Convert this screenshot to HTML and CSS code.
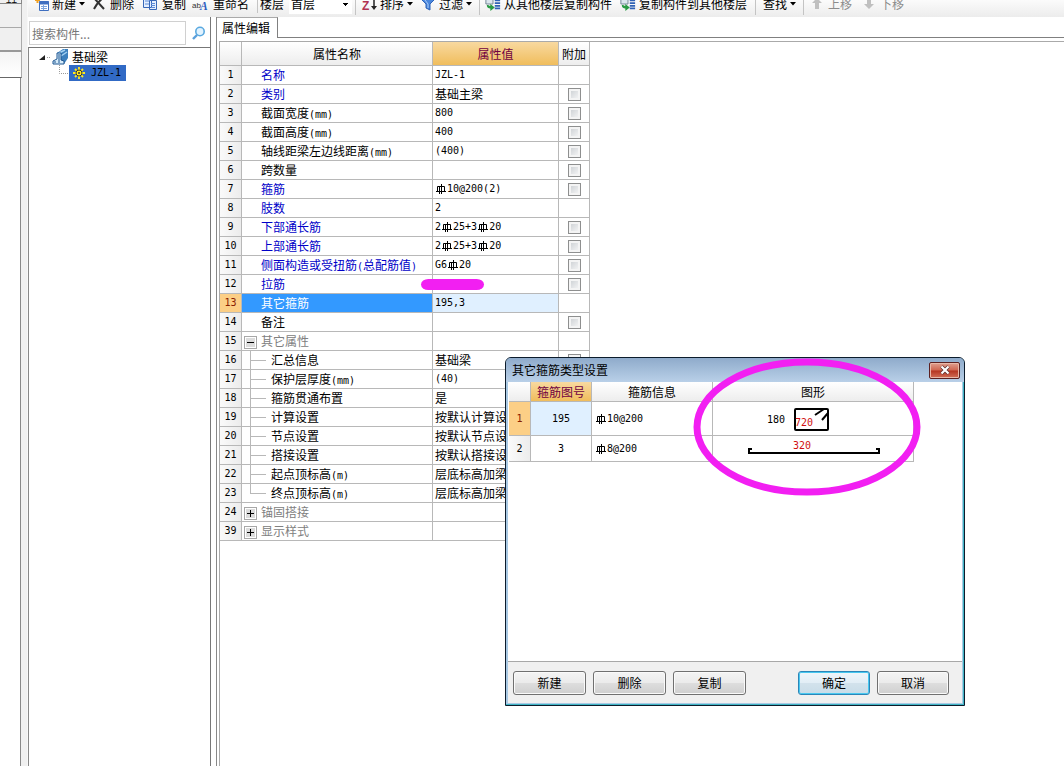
FILE: index.html
```
<!DOCTYPE html>
<html lang="zh-CN">
<head>
<meta charset="utf-8">
<title>属性编辑</title>
<link rel="stylesheet" href="styles.css">
</head>
<body>
<svg class="defs" aria-hidden="true">
  <symbol id="rebar" viewBox="0 0 12 12">
    <path d="M2.500 9v-5.500h7V9M1 8.500h10M4.500 3.500V11M6.500 1v10" fill="none" stroke="currentColor"/>
  </symbol>
  <symbol id="floors" viewBox="0 0 18 18">
    <path d="M1 3h8v6H1z" fill="#dce6ee" stroke="#6b7f90"/>
    <path d="M11 2h6M11 5h6M11 8h6M11 11h6M11 14h6" stroke="#2f62b5" stroke-width="2"/>
    <path d="M2 10c0 3 2 4 4 4v3l5-4-5-4v2c-1 0-2 0-2-1z" fill="#2a9a45"/>
  </symbol>
  <symbol id="caret" viewBox="0 0 6 4"><path d="M0 0h6L3 3.500z" fill="currentColor"/></symbol>
</svg>

<div class="app">
  <aside class="strip">
    <div class="strip-top"><span>++</span></div>
    <div class="strip-cell"></div>
    <div class="strip-cell strip-dark"></div>
    <div class="strip-cell strip-light"></div>
    <div class="strip-rest"></div>
  </aside>

  <div class="work">
    <div class="toolbar" role="toolbar">
      <button class="tool w-new"><svg class="i16" viewBox="0 0 16 16"><path d="M5.500 5.500h9v9h-9z" fill="#fff" stroke="#3f6fc0"/><path d="M5 7h10" stroke="#3f6fc0" stroke-width="3"/><path d="M7 10.500h6M7 12.500h6M9.500 9v5" stroke="#7da4dd"/><path d="M1 4h5M3.500 1v6" stroke="#f0a020" stroke-width="2"/></svg>新建<svg class="caret"><use href="#caret"/></svg></button>
      <button class="tool w-del"><svg class="i16" viewBox="0 0 16 16"><path d="M3 2l10 11M12 2C8 5 5 9 3 13" fill="none" stroke="#333" stroke-width="2"/></svg>删除</button>
      <button class="tool w-copy"><svg class="i16" viewBox="0 0 16 16"><path d="M1.500 1.500h8v10h-8zM7.500 4.500h7v9h-7z" fill="#e4efff" stroke="#3968b8"/><path d="M3 5h4M3 8h4M9 7.500h4M9 9.500h4M9 11.500h4" stroke="#5c8bd8"/></svg>复制</button>
      <button class="tool w-ren"><svg class="i16" viewBox="0 0 18 16"><text x="0" y="13" class="ab">ab</text><text x="9" y="15" class="big-a">A</text></svg>重命名</button>
      <label class="floor" for="floor">楼层</label>
      <select id="floor"><option>首层</option></select>
      <button class="tool sep w-sort"><svg class="i16" viewBox="0 0 16 16"><text x="1" y="14" class="zz">Z</text><path d="M13 3v9" stroke="#222" stroke-width="1.500"/><path d="M10 10h6l-3 4z" fill="#222"/></svg>排序<svg class="caret"><use href="#caret"/></svg></button>
      <button class="tool w-filter"><svg class="i16" viewBox="0 0 16 16"><path d="M2 2h12v2l-4 4v6l-4-2V8L2 4z" fill="#4a86dc" stroke="#2c62b8"/><path d="M5 4l3 4v4" fill="none" stroke="#a8cdf8"/></svg>过滤<svg class="caret"><use href="#caret"/></svg></button>
      <button class="tool sep w-from"><svg class="i16"><use href="#floors"/></svg>从其他楼层复制构件</button>
      <button class="tool w-to"><svg class="i16"><use href="#floors"/></svg>复制构件到其他楼层</button>
      <button class="tool sep w-find">查找<svg class="caret"><use href="#caret"/></svg></button>
      <button class="tool sep off w-up" disabled><svg class="i16" viewBox="0 0 16 16"><path d="M8 2l5 5h-3v6H6V7H3z" fill="#c0c0c0"/></svg>上移</button>
      <button class="tool off" disabled><svg class="i16" viewBox="0 0 16 16"><path d="M8 13l5-5h-3V3H6v5H3z" fill="#c0c0c0"/></svg>下移</button>
    </div>

    <div class="panes">
      <section class="side">
        <div class="search">
          <input type="text" aria-label="搜索构件" placeholder="搜索构件...">
          <button class="find" aria-label="搜索"><svg viewBox="0 0 14 14"><circle cx="8" cy="5.500" r="4.200" fill="#e2f3ff" stroke="#5aa9e0" stroke-width="1.600"/><path d="M5 9l-4 4" stroke="#5aa0dc" stroke-width="2.400"/></svg></button>
        </div>
        <ul class="tree">
          <li class="node">
            <svg class="twist" viewBox="0 0 14 16"><path d="M8 6v5H2z" fill="#222"/><path d="M10 8.500h4" stroke="#999" stroke-dasharray="1 1"/></svg>
            <svg class="beam" viewBox="0 0 16 16"><path d="M5 4l6-4h5v9l-4 6H9z" fill="#3d80bd"/><path d="M7 4l6-3M9 7l6-4" stroke="#a5d1f2" stroke-width="1.500"/><path d="M5 4h4v7l3 1v3H1v-3l4-2z" fill="#d5ebfa" stroke="#1d5590"/><path d="M7 5v9M3 12v2" stroke="#1d5590"/></svg>
            <span>基础梁</span>
          </li>
          <li class="node leaf">
            <svg class="elbow" viewBox="0 0 10 16"><path d="M.5 0v8.500H10" fill="none" stroke="#999" stroke-dasharray="1 1"/></svg>
            <span class="picked"><svg class="sun" viewBox="0 0 12 12"><path d="M6 0v12M0 6h12M2 2l8 8M10 2l-8 8" stroke="#ffea20" stroke-width="1.800"/><circle cx="6" cy="6" r="3" fill="#ffea20" stroke="#333"/><circle cx="6" cy="6" r="1" fill="#333"/></svg><span class="m">JZL-1</span></span>
          </li>
        </ul>
      </section>

      <main class="editor">
        <div class="tabs" role="tablist"><button class="tab" role="tab" aria-selected="true">属性编辑</button></div>
        <div class="sheet">
          <table class="grid props">
            <colgroup><col class="c-num"><col class="c-name"><col class="c-val"><col class="c-add"></colgroup>
            <thead><tr><th></th><th>属性名称</th><th class="hot">属性值</th><th>附加</th></tr></thead>
            <tbody>
              <tr><th>1</th><td class="key">名称</td><td class="m">JZL-1</td><td></td></tr>
              <tr><th>2</th><td class="key">类别</td><td>基础主梁</td><td><input type="checkbox" aria-label="附加 类别"></td></tr>
              <tr><th>3</th><td>截面宽度<span class="m">(mm)</span></td><td class="m">800</td><td><input type="checkbox" aria-label="附加 截面宽度"></td></tr>
              <tr><th>4</th><td>截面高度<span class="m">(mm)</span></td><td class="m">400</td><td><input type="checkbox" aria-label="附加 截面高度"></td></tr>
              <tr><th>5</th><td>轴线距梁左边线距离<span class="m">(mm)</span></td><td class="m">(400)</td><td><input type="checkbox" aria-label="附加 轴线距梁左边线距离"></td></tr>
              <tr><th>6</th><td>跨数量</td><td></td><td><input type="checkbox" aria-label="附加 跨数量"></td></tr>
              <tr><th>7</th><td class="key">箍筋</td><td class="m"><svg class="rb"><use href="#rebar"/></svg>10@200(2)</td><td><input type="checkbox" aria-label="附加 箍筋"></td></tr>
              <tr><th>8</th><td class="key">肢数</td><td class="m">2</td><td></td></tr>
              <tr><th>9</th><td class="key">下部通长筋</td><td class="m">2<svg class="rb"><use href="#rebar"/></svg>25+3<svg class="rb"><use href="#rebar"/></svg>20</td><td><input type="checkbox" aria-label="附加 下部通长筋"></td></tr>
              <tr><th>10</th><td class="key">上部通长筋</td><td class="m">2<svg class="rb"><use href="#rebar"/></svg>25+3<svg class="rb"><use href="#rebar"/></svg>20</td><td><input type="checkbox" aria-label="附加 上部通长筋"></td></tr>
              <tr><th>11</th><td class="key">侧面构造或受扭筋<span class="m">(</span>总配筋值<span class="m">)</span></td><td class="m">G6<svg class="rb"><use href="#rebar"/></svg>20</td><td><input type="checkbox" aria-label="附加 侧面构造或受扭筋"></td></tr>
              <tr><th>12</th><td class="key">拉筋</td><td class="marked"><span class="marker"></span></td><td><input type="checkbox" aria-label="附加 拉筋"></td></tr>
              <tr class="current"><th>13</th><td>其它箍筋</td><td class="m">195,3</td><td></td></tr>
              <tr><th>14</th><td>备注</td><td></td><td><input type="checkbox" aria-label="附加 备注"></td></tr>
              <tr><th>15</th><td class="group"><button class="fold minus" aria-label="收起"></button>其它属性</td><td></td><td></td></tr>
              <tr><th>16</th><td class="child">汇总信息</td><td>基础梁</td><td><input type="checkbox" aria-label="附加 汇总信息"></td></tr>
              <tr><th>17</th><td class="child">保护层厚度<span class="m">(mm)</span></td><td class="m">(40)</td><td></td></tr>
              <tr><th>18</th><td class="child">箍筋贯通布置</td><td>是</td><td></td></tr>
              <tr><th>19</th><td class="child">计算设置</td><td>按默认计算设</td><td></td></tr>
              <tr><th>20</th><td class="child">节点设置</td><td>按默认节点设</td><td></td></tr>
              <tr><th>21</th><td class="child">搭接设置</td><td>按默认搭接设</td><td></td></tr>
              <tr><th>22</th><td class="child">起点顶标高<span class="m">(m)</span></td><td>层底标高加梁</td><td></td></tr>
              <tr><th>23</th><td class="child last">终点顶标高<span class="m">(m)</span></td><td>层底标高加梁</td><td></td></tr>
              <tr><th>24</th><td class="group"><button class="fold plus" aria-label="展开"></button>锚固搭接</td><td></td><td></td></tr>
              <tr><th>39</th><td class="group"><button class="fold plus" aria-label="展开"></button>显示样式</td><td></td><td></td></tr>
            </tbody>
          </table>
        </div>
      </main>
    </div>
  </div>
</div>

<div class="dialog" role="dialog" aria-labelledby="dlg-title">
  <header class="title">
    <span id="dlg-title">其它箍筋类型设置</span>
    <button class="close" aria-label="关闭"><svg viewBox="0 0 12 10"><path d="M2.500 1.500l7 7M9.500 1.500l-7 7" stroke="#5a3030" stroke-width="3.600"/><path d="M2.500 1.500l7 7M9.500 1.500l-7 7" stroke="#fff" stroke-width="2.200"/></svg></button>
  </header>
  <div class="content">
    <table class="grid types">
      <colgroup><col class="t-num"><col class="t-id"><col class="t-info"><col class="t-shape"></colgroup>
      <thead><tr><th></th><th class="hot">箍筋图号</th><th>箍筋信息</th><th>图形</th></tr></thead>
      <tbody>
        <tr class="tall picked-row"><th>1</th><td class="m id">195</td><td class="m"><svg class="rb"><use href="#rebar"/></svg>10@200</td>
          <td class="shape"><svg class="fig1" viewBox="0 0 200 33"><text x="54" y="21" class="dim">180</text><rect x="82" y="7" width="33" height="21" rx="1" fill="none" stroke="#000" stroke-width="2"/><path d="M102 13l9-6M109 18l6-7" stroke="#000" stroke-width="2"/><text x="82" y="24" class="dim red">720</text></svg></td></tr>
        <tr class="low"><th>2</th><td class="m id">3</td><td class="m"><svg class="rb"><use href="#rebar"/></svg>8@200</td>
          <td class="shape"><svg class="fig2" viewBox="0 0 200 25"><text x="80" y="13" class="dim red">320</text><path d="M39 13h-3v4h130v-4h-3" fill="none" stroke="#000" stroke-width="2"/></svg></td></tr>
      </tbody>
    </table>
  </div>
  <footer class="actions">
    <button class="btn">新建</button>
    <button class="btn">删除</button>
    <button class="btn">复制</button>
    <span class="gap"></span>
    <button class="btn narrow primary">确定</button>
    <button class="btn narrow">取消</button>
  </footer>
  <svg class="ring" viewBox="0 0 228 138"><ellipse cx="114" cy="69" rx="110" ry="65" fill="none" stroke="#f21ff2" stroke-width="7"/></svg>
</div>
</body>
</html>
```
FILE: styles.css
```
* { box-sizing: border-box; }

html, body { height: 100%; }

body {
  margin: 0;
  overflow: hidden;
  position: relative;
  background: #fff;
  color: #000;
  font: 12px/18px "Noto Sans CJK SC", sans-serif;
}

button, input, select { font: inherit; color: inherit; }
button { padding: 0; border: 0; background: none; }

.defs { position: absolute; width: 0; height: 0; }
.m, .grid tbody th { font-family: "DejaVu Sans Mono", monospace; font-size: 10px; font-weight: normal; }
span.m { line-height: 10px; }

.app { display: flex; height: 100%; }

/* Left edge strip */
.strip { display: flex; flex-direction: column; flex: 0 0 22px; background: #f0f0f0; }
.strip-top {
  height: 4px;
  overflow: hidden;
  display: flex;
  align-items: center;
  justify-content: flex-end;
  padding-right: 4px;
  border-right: 1px solid #888;
  border-bottom: 1px solid #888;
  font-size: 10px;
}
.strip-cell { height: 24px; border-right: 1px solid #aaa; border-bottom: 1px solid #aaa; }
.strip-dark { border-bottom: 2px solid #999; }
.strip-light { height: 26px; background: linear-gradient(#f4f4f4, #fff); border-bottom-color: #666; }
.strip-rest { flex: 1; margin-right: 1px; background: #fff; border-right: 1px solid #888; }

.work {
  display: flex;
  flex-direction: column;
  flex: 1;
  min-width: 0;
  padding-left: 6px;
  background: linear-gradient(90deg, #f0f0f0 5px, #fff 6px);
}

/* Toolbar */
.toolbar {
  display: flex;
  align-items: center;
  flex: 0 0 27px;
  margin-top: -10px;
  padding-left: 6px;
  background: linear-gradient(#fdfdfd 30%, #ececec);
  white-space: nowrap;
}
.tool { display: flex; align-items: center; height: 22px; }
.sep { border-left: 1px solid #c4c4c4; padding-left: 5px; }
.off { color: #8c8c8c; }
.i16 { width: 16px; height: 16px; margin-right: 3px; }
.caret { width: 6px; height: 4px; margin-left: 3px; }
.w-new { width: 57px; }
.w-new .i16 { margin-right: 2px; }
.w-del { width: 51px; }
.w-copy { width: 50px; }
.w-copy .i16 { margin-right: 4px; }
.w-ren { width: 65px; }
.w-ren .i16 { margin-right: 5px; }
.w-sort { width: 65px; }
.w-filter { width: 59px; }
.w-from { width: 141px; }
.w-to { width: 135px; }
.w-find { width: 48px; padding-left: 7px; }
.w-up { width: 58px; }
.ab { font: 9px "Liberation Sans", sans-serif; fill: #333; }
.big-a { font: italic bold 13px "Liberation Serif", serif; fill: #2a5cc0; }
.zz { font: bold 12px "Liberation Sans", sans-serif; fill: #b03050; }
.floor { border-left: 1px solid #c4c4c4; padding-left: 2px; }
#floor {
  appearance: none;
  width: 63px;
  height: 20px;
  margin: 0 3px 0 5px;
  padding: 0 2px;
  border: 0;
  border-radius: 0;
  background: linear-gradient(#000, #000) 54px 9px / 5px 1px no-repeat,
    linear-gradient(#000, #000) 55px 10px / 3px 1px no-repeat,
    linear-gradient(#000, #000) 56px 11px / 1px 1px no-repeat, #fff;
}

.panes { display: flex; flex: 1; min-height: 0; }

/* Component tree */
.side { display: flex; flex-direction: column; flex: 0 0 183px; border-right: 1px solid #777; }
.search { display: flex; align-items: center; height: 30px; padding: 2px 2px 0 1px; gap: 6px; }
.search input {
  flex: 1;
  min-width: 0;
  height: 24px;
  padding: 0 2px;
  border: 1px solid #d0d0d0;
  background: #fff;
  color: #777;
}
.search input::placeholder { color: #777; opacity: 1; }
.find { width: 16px; height: 16px; }
.find svg { display: block; width: 14px; height: 14px; }
.tree {
  flex: 1;
  margin: 0;
  padding: 1px 0 0 8px;
  list-style: none;
  border-top: 1px solid #777;
  border-left: 1px solid #888;
}
.node { display: flex; align-items: center; height: 16px; }
.twist { width: 14px; height: 16px; margin-right: 1px; }
.beam { width: 16px; height: 16px; margin-right: 4px; }
.leaf { padding-left: 22px; }
.elbow { width: 10px; height: 16px; }
.picked { display: flex; align-items: center; height: 16px; padding: 0 5px 0 4px; background: #316ac5; }
.sun { width: 12px; height: 12px; margin-right: 6px; }

/* Property sheet */
.editor { display: flex; flex-direction: column; flex: 1; min-width: 0; margin-left: 5px; border-left: 1px solid #888; }
.tabs { display: flex; height: 21px; border-bottom: 1px solid #808080; }
.tab { height: 21px; padding: 0 7px 0 5px; background: #fff; border-top: 1px solid #aaa; border-right: 1px solid #808080; }
.sheet { flex: 1; margin: 3px 0 0 2px; border-top: 1px solid #aaa; border-left: 1px solid #aaa; }

.grid { border-collapse: separate; border-spacing: 0; table-layout: fixed; }
.grid th, .grid td {
  height: 19px;
  padding: 0;
  border-right: 1px solid #b8b8b8;
  border-bottom: 1px solid #b8b8b8;
  font-weight: normal;
  white-space: nowrap;
  overflow: hidden;
}
.grid thead th { background: linear-gradient(#fff, #ededed); }
.grid tbody th { background: linear-gradient(90deg, #fafafa, #ececec); text-align: center; }
.grid thead .hot { background: linear-gradient(#f8d9a0, #f0bd5c); color: #700040; }
.rb { width: 12px; height: 12px; vertical-align: -3px; }

.props { width: 370px; }
.c-num { width: 22px; }
.c-name { width: 191px; }
.c-val { width: 126px; }
.c-add { width: 31px; }
.props thead th { height: 24px; }
.props td { line-height: 18px; }
.props td:nth-child(2) { padding-left: 19px; }
.props td:nth-child(3) { padding-left: 2px; }
.props td:nth-child(4) { text-align: center; }
.props .key { color: #0000c8; }
.props .group { color: #808080; }
.props td.group { padding-left: 2px; }
.props td.child {
  padding-left: 29px;
  background: linear-gradient(#b8b8b8, #b8b8b8) 8px 0 / 1px 100% no-repeat,
    linear-gradient(#b8b8b8, #b8b8b8) 8px 9px / 16px 1px no-repeat;
}
.props td.last { background-size: 1px 9px, 16px 1px; }
.props .current th { background: #fccf86; color: #8a2000; }
.props .current td:nth-child(2) { background: #3399ff; color: #fff; }
.props .current td:nth-child(3) { background: #e0f0ff; }

.grid input {
  appearance: none;
  display: block;
  width: 13px;
  height: 13px;
  margin: 0 auto;
  border: 1px solid #8e8f8f;
  background: linear-gradient(135deg, #c8ccd0, #fafafa);
  box-shadow: inset 0 0 0 2px #f4f4f4;
}
.fold {
  width: 13px;
  height: 13px;
  margin-right: 4px;
  vertical-align: -2px;
  border: 1px solid #a8a8a8;
  box-shadow: inset 0 0 0 1px #fff;
}
.minus { background: linear-gradient(#000, #000) center / 7px 1px no-repeat, #dcdcdc; }
.plus { background: linear-gradient(#000, #000) center / 7px 1px no-repeat, linear-gradient(#000, #000) center / 1px 7px no-repeat, #dcdcdc; }
.props .marked { position: relative; overflow: visible; }
.marker { position: absolute; left: -12px; top: 4px; width: 63px; height: 11px; border-radius: 8px / 6px; background: #f21ff2; }

/* Stirrup dialog */
.dialog {
  position: absolute;
  left: 505px;
  top: 357px;
  width: 460px;
  height: 349px;
  display: flex;
  flex-direction: column;
  padding: 0 2px 2px;
  border: 1px solid #0c1c2c;
  border-radius: 6px 6px 0 0;
  background: #a9c9e4;
  box-shadow: inset -1px -1px 0 #3fb5c5;
}
.title {
  display: flex;
  align-items: center;
  justify-content: space-between;
  height: 24px;
  margin: 0 -2px;
  padding: 0 4px 0 6px;
  border-radius: 5px 5px 0 0;
  background: linear-gradient(#8fabcb, #b9d0e8);
}
.close {
  display: flex;
  align-items: center;
  justify-content: center;
  width: 31px;
  height: 17px;
  border: 1px solid #5c2020;
  border-radius: 2px;
  background: linear-gradient(#e0a090, #cf6650 48%, #b53420 52%, #d27058);
  box-shadow: inset 0 0 0 1px #e8b8a8;
}
.close svg { width: 12px; height: 10px; }
.content { flex: 1; padding-left: 1px; background: #fff; border-bottom: 1px solid #a8a8a8; }
.types { width: 405px; }
.t-num { width: 22px; }
.t-id { width: 61px; }
.t-info { width: 121px; }
.t-shape { width: 201px; }
.types thead th { height: 20px; }
.types .tall td { height: 34px; }
.types .low td { height: 26px; }
.types .id { text-align: center; }
.types td:nth-child(3) { padding-left: 3px; }
.types .picked-row th { background: #fccf86; color: #8a2000; }
.types .picked-row .id { background: #e0f0ff; }
.shape svg { display: block; width: 200px; }
.fig1 { height: 33px; }
.fig2 { height: 25px; }
.dim { font: 10px "DejaVu Sans Mono", monospace; }
.red { fill: #d01010; }

.actions { display: flex; align-items: center; gap: 7px; height: 41px; padding: 0 13px 0 5px; background: #f0f0f0; }
.gap { flex: 1; }
.btn {
  width: 73px;
  height: 24px;
  border: 1px solid #707070;
  border-radius: 3px;
  background: linear-gradient(#f4f4f4, #ebebeb 48%, #dddddd 52%, #cfcfcf);
  box-shadow: inset 0 0 0 1px #fafafa;
}
.narrow { width: 72px; }
.primary { border-color: #2c86b8; box-shadow: inset 0 0 0 1px #48c8f0; background: linear-gradient(#f0f6fa, #e2eef6 48%, #d2e2ec 52%, #c8dce8); }
.ring { position: absolute; left: 187px; top: 0; width: 228px; height: 138px; pointer-events: none; }
```
